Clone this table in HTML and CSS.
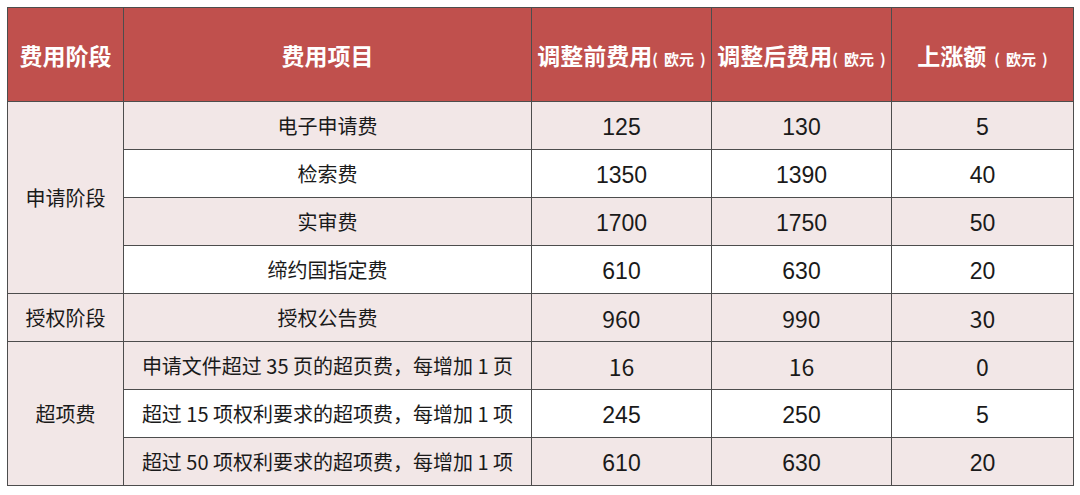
FILE: index.html
```html
<!DOCTYPE html>
<html lang="zh">
<head>
<meta charset="utf-8">
<link rel="stylesheet" href="styles.css">
</head>
<body>
<table class="fees">
  <colgroup>
    <col class="c1"><col class="c2"><col class="c3"><col class="c4"><col class="c5">
  </colgroup>
  <thead>
    <tr>
      <th>费用阶段</th>
      <th>费用项目</th>
      <th>调整前费用<span class="unit">(<span class="u">欧元</span>)</span></th>
      <th>调整后费用<span class="unit">(<span class="u">欧元</span>)</span></th>
      <th>上涨额<span class="unit spaced">(<span class="u">欧元</span>)</span></th>
    </tr>
  </thead>
  <tbody>
    <tr class="pink">
      <td rowspan="4" class="pink">申请阶段</td>
      <td>电子申请费</td><td class="num">125</td><td class="num">130</td><td class="num">5</td>
    </tr>
    <tr class="white">
      <td>检索费</td><td class="num">1350</td><td class="num">1390</td><td class="num">40</td>
    </tr>
    <tr class="pink">
      <td>实审费</td><td class="num">1700</td><td class="num">1750</td><td class="num">50</td>
    </tr>
    <tr class="white">
      <td>缔约国指定费</td><td class="num">610</td><td class="num">630</td><td class="num">20</td>
    </tr>
    <tr class="pink">
      <td>授权阶段</td>
      <td>授权公告费</td><td class="num alt">960</td><td class="num alt">990</td><td class="num alt">30</td>
    </tr>
    <tr class="pink">
      <td rowspan="3" class="pink">超项费</td>
      <td>申请文件超过 35 页的超页费，每增加 1 页</td><td class="num alt">16</td><td class="num alt">16</td><td class="num alt">0</td>
    </tr>
    <tr class="white">
      <td>超过 15 项权利要求的超项费，每增加 1 项</td><td class="num">245</td><td class="num">250</td><td class="num">5</td>
    </tr>
    <tr class="pink">
      <td>超过 50 项权利要求的超项费，每增加 1 项</td><td class="num">610</td><td class="num">630</td><td class="num">20</td>
    </tr>
  </tbody>
</table>
</body>
</html>
```
FILE: styles.css
```css
html, body {
  margin: 0;
  background: #ffffff;
}
body {
  padding: 7px 0 0 7px;
  font-family: "Noto Sans CJK SC", "Noto Sans", sans-serif;
}
.fees {
  border-collapse: collapse;
  width: 1066px;
  table-layout: fixed;
  color: #1a1a1a;
}
.c1 { width: 116px; }
.c2 { width: 408px; }
.c3 { width: 180px; }
.c4 { width: 180px; }
.c5 { width: 182px; }
.fees th, .fees td {
  border: 1px solid #4d4d4d;
  text-align: center;
  vertical-align: middle;
  padding: 0;
}
.fees th {
  background: #c0504d;
  color: #ffffff;
  font-weight: 700;
  font-size: 23px;
  height: 93px;
  white-space: nowrap;
}
.fees .unit {
  font-size: 15px;
  font-weight: 700;
}
.fees .unit .u {
  margin: 0 6px;
}
.fees .unit.spaced {
  margin-left: 8px;
}
.fees td {
  height: 47px;
  font-size: 20px;
  white-space: nowrap;
}
.fees .pink td, .fees td.pink { background: #f2e7e7; }
.fees .white td { background: #ffffff; }
.fees td.num {
  font-family: "Liberation Sans", Arial, sans-serif;
  font-size: 23px;
  padding-top: 3px;
  height: 44px;
}
.fees td.num.alt {
  font-family: "Noto Sans CJK SC", "Noto Sans", sans-serif;
  padding-top: 1px;
  height: 46px;
}
```
